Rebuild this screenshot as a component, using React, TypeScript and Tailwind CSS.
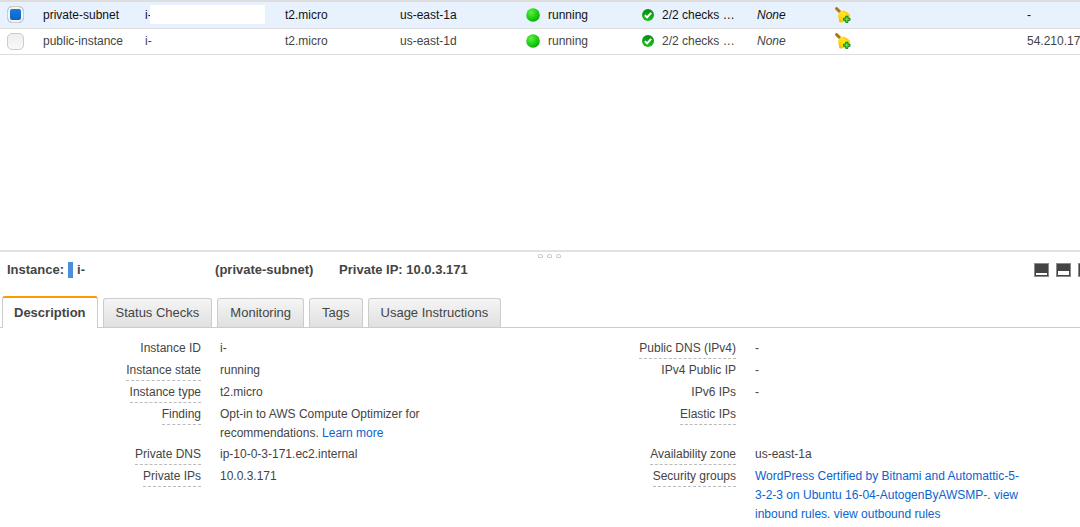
import { useState } from 'react';
import type { ReactNode } from 'react';

type Instance = {
  name: string;
  zone: string;
  address: string;
};

const instances: Instance[] = [
  { name: 'private-subnet', zone: 'us-east-1a', address: '-' },
  { name: 'public-instance', zone: 'us-east-1d', address: '54.210.17' },
];

const tabs = ['Description', 'Status Checks', 'Monitoring', 'Tags', 'Usage Instructions'];

function StateDot() {
  return (
    <svg width="14" height="14" viewBox="0 0 14 14" className="shrink-0" aria-hidden="true">
      <defs>
        <radialGradient id="dot" cx="0.35" cy="0.3" r="0.75">
          <stop offset="0" stopColor="#5fee48" />
          <stop offset="0.55" stopColor="#22d312" />
          <stop offset="1" stopColor="#0fa80a" />
        </radialGradient>
      </defs>
      <circle cx="7" cy="7" r="6.8" fill="url(#dot)" />
    </svg>
  );
}

function CheckBadge() {
  return (
    <svg width="12" height="12" viewBox="0 0 12 12" className="shrink-0" aria-hidden="true">
      <defs>
        <linearGradient id="badge" x1="0" y1="0" x2="0" y2="1">
          <stop offset="0" stopColor="#078a12" />
          <stop offset="1" stopColor="#1fc01f" />
        </linearGradient>
      </defs>
      <circle cx="6" cy="6" r="6" fill="url(#badge)" />
      <path d="M2.8 6.2 5.1 8.3 9.2 3.8" fill="none" stroke="#fff" strokeWidth="2" />
    </svg>
  );
}

function BellIcon() {
  return (
    <svg width="16" height="16" viewBox="0 0 16 16" className="block" aria-hidden="true">
      <defs>
        <linearGradient id="bell" x1="0" y1="1" x2="1" y2="0">
          <stop offset="0" stopColor="#e8a200" />
          <stop offset="0.3" stopColor="#ffd60a" />
          <stop offset="0.6" stopColor="#ffe620" />
          <stop offset="1" stopColor="#eaa800" />
        </linearGradient>
      </defs>
      <path d="M1.6 1.6 5 5" stroke="#b0741a" strokeWidth="3" strokeLinecap="round" />
      <path
        d="M3.2 8C3.4 5.600 5.400 3.600 8 3.400C10.400 3.300 12.800 5.600 14.800 7.800C15.400 8.600 15.200 9.600 14.600 10.400C12.800 13 9.400 15.200 5.800 15.600C4.800 15.700 4.300 15 4.200 14.200C4 12 3.100 10.200 3.200 8Z"
        fill="url(#bell)"
      />
      <path
        d="M10.7 9.2H12.9V11.200H15V13.300H12.900V15.400H10.700V13.300H8.600V11.200H10.700Z"
        fill="#5fe050"
        stroke="#06830f"
        strokeWidth="1"
      />
    </svg>
  );
}

function PaneIcon({ fill }: { fill: 'low' | 'half' | 'full' }) {
  const height = { low: 2, half: 4, full: 8 }[fill];
  return (
    <svg width="15" height="14" viewBox="0 0 15 14" className="block" aria-hidden="true">
      <rect x="0.5" y="0.5" width="14" height="13" fill="#444" stroke="#8c8c8c" />
      <rect x="2" y={12 - height} width="11" height={height} fill="#fff" />
    </svg>
  );
}

function Label({ children, plain }: { children: ReactNode; plain?: boolean }) {
  return (
    <dt className="w-[201px] shrink-0 text-right">
      <span
        className={
          plain
            ? 'inline-block border-b border-transparent'
            : 'inline-block border-b border-dashed border-[#bbb]'
        }
      >
        {children}
      </span>
    </dt>
  );
}

function Field({ label, plain, children }: { label: string; plain?: boolean; children?: ReactNode }) {
  return (
    <div className="flex gap-[19px] pb-0.5">
      <Label plain={plain}>{label}</Label>
      <dd className="max-w-[272px] flex-1">{children}</dd>
    </div>
  );
}

function Link({ children }: { children: ReactNode }) {
  return (
    <a href="#" className="text-[#0b63ce] hover:underline">
      {children}
    </a>
  );
}

export default function App() {
  const [selected, setSelected] = useState('private-subnet');
  const [tab, setTab] = useState('Description');

  return (
    <main className="overflow-hidden bg-white font-['Liberation_Sans',Arial,sans-serif] text-xs text-[#444]">
      <section className="h-[250px] border-t-2 border-[#ddd]">
        <table className="w-full table-fixed border-collapse text-left whitespace-nowrap">
          <colgroup>
            <col className="w-[35px]" />
            <col className="w-[102px]" />
            <col className="w-[140px]" />
            <col className="w-[115px]" />
            <col className="w-[126px]" />
            <col className="w-[116px]" />
            <col className="w-[115px]" />
            <col className="w-[78px]" />
            <col className="w-[192px]" />
            <col />
          </colgroup>
          <tbody>
            {instances.map((item) => {
              const active = item.name === selected;
              return (
                <tr
                  key={item.name}
                  className={
                    active
                      ? 'h-[26px] border-b border-[#ddd] bg-[#e8f2fe] text-[#111]'
                      : 'h-[26px] border-b border-[#ddd]'
                  }
                >
                  <td className="pl-[7px]">
                    <input
                      type="checkbox"
                      aria-label={item.name}
                      checked={active}
                      onChange={() => setSelected(item.name)}
                      className="block size-[17px] appearance-none rounded-[5px] border border-[#ccc] bg-linear-to-b from-[#eee] to-[#f8f8f8] checked:from-[#1a80e0] checked:to-[#0560c4] checked:shadow-[inset_0_0_0_2px_#f4f4f4]"
                    />
                  </td>
                  <td className="pl-2">{item.name}</td>
                  <td className="pl-2">
                    <div className="flex items-center">
                      i-
                      {active && <span className="-ml-0.5 h-[19px] w-[115px] bg-white" />}
                    </div>
                  </td>
                  <td className="pl-2">t2.micro</td>
                  <td className="pl-2">{item.zone}</td>
                  <td className="pl-2">
                    <div className="flex items-center gap-2">
                      <StateDot />
                      running
                    </div>
                  </td>
                  <td className="pl-2">
                    <div className="flex items-center gap-2">
                      <CheckBadge />
                      2/2 checks …
                    </div>
                  </td>
                  <td className="pl-2 italic">None</td>
                  <td className="pl-2">
                    <button type="button" aria-label="Create alarm" className="block">
                      <BellIcon />
                    </button>
                  </td>
                  <td className="pl-2">{item.address}</td>
                </tr>
              );
            })}
          </tbody>
        </table>
      </section>

      {/* the lower pane runs a little past the right edge of the window */}
      <section className="-mr-[18px] border-t-2 border-[#e2e2e2]">
        <div className="flex h-2 items-center justify-center gap-1">
          <span className="h-1 w-[5px] rounded-t-xs border border-[#ccc]" />
          <span className="h-1 w-[5px] rounded-t-xs border border-[#ccc]" />
          <span className="h-1 w-[5px] rounded-t-xs border border-[#ccc]" />
        </div>

        <header className="flex h-5 items-center justify-between pr-[5px] pl-[7px]">
          <h2 className="flex items-center text-[13px] font-bold">
            Instance:
            <span className="mx-1 h-4 w-[5px] bg-[#4a90d9]" />
            <span className="w-[138px]">i-</span>
            <span className="w-[124px]">(private-subnet)</span>
            <span>Private IP: 10.0.3.171</span>
          </h2>
          <div className="flex gap-[7px]">
            <button type="button" aria-label="Minimize pane">
              <PaneIcon fill="low" />
            </button>
            <button type="button" aria-label="Split pane">
              <PaneIcon fill="half" />
            </button>
            <button type="button" aria-label="Maximize pane">
              <PaneIcon fill="full" />
            </button>
          </div>
        </header>

        <nav role="tablist" className="mt-4 flex items-end gap-[5px] border-b border-[#ccc] pl-0.5 text-[13px]">
          {tabs.map((name) => (
            <button
              key={name}
              type="button"
              role="tab"
              aria-selected={name === tab}
              onClick={() => setTab(name)}
              className={
                name === tab
                  ? '-mb-px h-8 rounded-t-[3px] border-x border-t-2 border-x-[#ccc] border-t-[#ff9900] bg-white px-[11px] font-bold'
                  : 'h-[29px] rounded-t-[3px] border border-b-0 border-[#ccc] bg-linear-to-b from-[#f5f5f5] to-[#e0e0e0] px-3'
              }
            >
              {name}
            </button>
          ))}
        </nav>

        <dl className="mt-[11px] mr-7 grid grid-cols-2 leading-[19px]">
          <Field label="Instance ID" plain>i-</Field>
          <Field label="Public DNS (IPv4)">-</Field>
          <Field label="Instance state">running</Field>
          <Field label="IPv4 Public IP" plain>-</Field>
          <Field label="Instance type">t2.micro</Field>
          <Field label="IPv6 IPs" plain>-</Field>
          <Field label="Finding">
            Opt-in to AWS Compute Optimizer for recommendations. <Link>Learn more</Link>
          </Field>
          <Field label="Elastic IPs" />
          <Field label="Private DNS">ip-10-0-3-171.ec2.internal</Field>
          <Field label="Availability zone">us-east-1a</Field>
          <Field label="Private IPs">10.0.3.171</Field>
          <Field label="Security groups">
            <Link>
              WordPress Certified by Bitnami and Automattic-5-
              <wbr />
              3-2-3 on Ubuntu 16-04-AutogenByAWSMP-
            </Link>
            . <Link>view inbound rules</Link>. <Link>view outbound rules</Link>
          </Field>
        </dl>
      </section>
    </main>
  );
}
